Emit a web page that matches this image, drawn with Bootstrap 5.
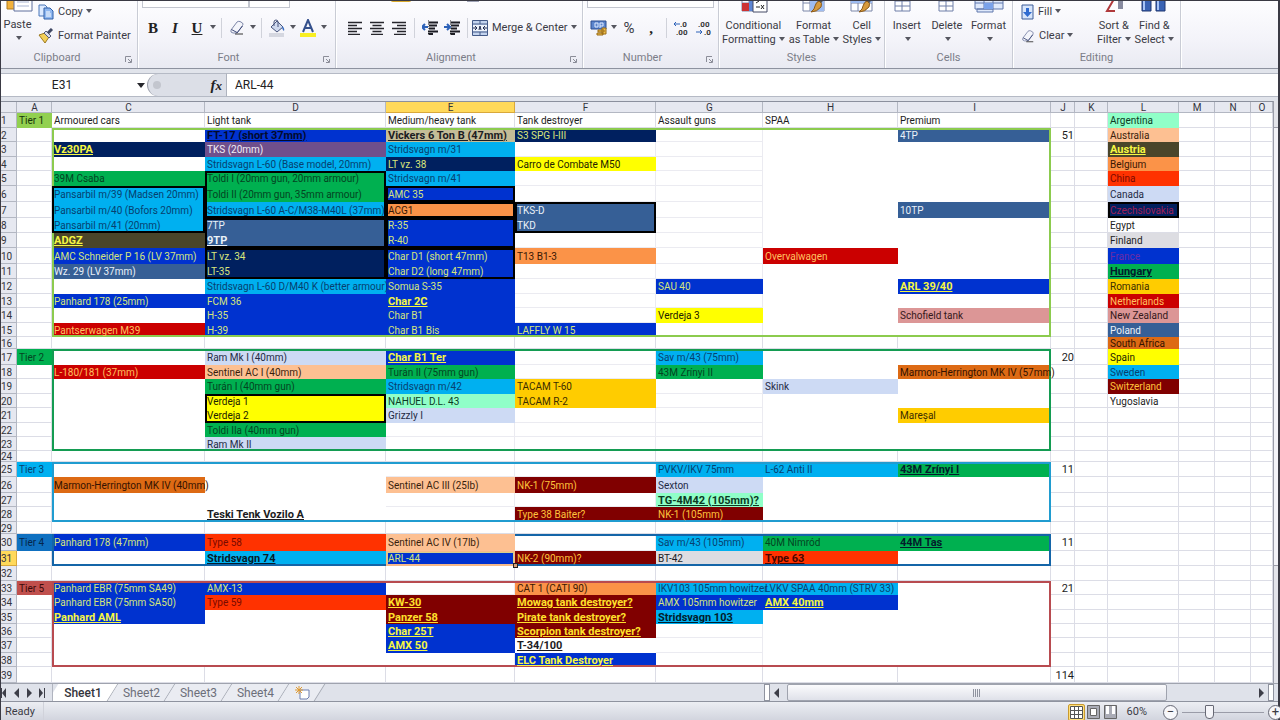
<!DOCTYPE html>
<html lang="en">
<head>
<meta charset="utf-8">
<meta name="viewport" content="width=device-width, initial-scale=1">
<title>Tank tiers - Sheet1</title>
<link href="https://cdn.jsdelivr.net/npm/bootstrap@5.3.0/dist/css/bootstrap.min.css" rel="stylesheet">
<style>
body{font-family:Roboto,"Liberation Sans",sans-serif;font-size:11px;line-height:14px;color:#3b3b45;background:#fff;overflow:hidden}
.app{border:solid #3a3a44;border-width:1px 2px 1px 1px}
button{border:0;background:none;padding:0;color:inherit}
/* ribbon */
.ribbon{height:68px;background:linear-gradient(#fdfdff,#f3f3f9 60%,#e9eaf2);border-bottom:1px solid #8d929f}
.grp{overflow:hidden;border-right:1px solid #c9ccd5;box-shadow:1px 0 #fff;position:relative}
.g-clip{width:137px}.g-font{width:198px}.g-align{width:247px}.g-num{width:136px}.g-style{width:166px}.g-cells{width:128px}.g-edit{width:168px}
.body-area{height:72px}
.cap{height:20px;line-height:20px;color:#7b7d88;text-align:center}
.launch{position:absolute;right:5px;bottom:5px}
.paste{width:33px}
.fill-clear{width:76px}
.w-font{width:107px}.w-size{width:41px}.w-num{width:127px}
.tool{width:22px;height:28px}
.caret{width:9px;height:28px}
.caret::after,.dn::after{content:"";display:inline-block;border:3px solid transparent;border-top:4px solid #55565f;border-bottom:0;vertical-align:2px}
.dn::after{margin-left:3px}
.vr-line{width:1px;height:20px;background:#d0d2da}
.tool-row{height:28px;margin:6px 0}
.sel{height:22px;border:1px solid #c3c6cf;background:#fff;font-size:11px;color:#222;appearance:none;padding:0 4px}
.small-row{height:24px}
.big{line-height:14px;text-align:center}
.big svg{margin-bottom:6px}
.serif{font-family:"Liberation Serif",serif;font-weight:700;font-size:15px;color:#222}
.pct{font-size:15px}
.lit{background:#ffdf6b;border:1px solid #d9a92c;border-radius:3px;height:22px}
/* formula bar */
.fbar{height:32px;background:#e1e4eb;padding:4px 0}
.fbar>*{border-top:1px solid #b5bac5;border-bottom:1px solid #b5bac5;height:24px}
.namebox{width:136px;border-left:0;border-right:0;border-radius:0;padding:0 14px 0 0;text-align:center;font-size:12px;color:#222;background:#fff}
.namedrop{width:10px;background:#fff}
.fx-area{width:80px;background:linear-gradient(90deg,#fff 8px,#dcdfe7 8px);border-right:1px solid #aeb3be}
.knob{width:22px;height:22px;border-radius:11px;background:#dcdfe7;border-left:1px solid #9b9fab}
.knob::after{content:"";display:block;width:8px;height:8px;border-radius:4px;background:#c3c6ce;margin:0 0 0 5px}
.formula{border-left:0;border-right:0;padding:0 8px;font-size:12px;color:#222;min-width:0}
/* grid */
.sheet{table-layout:fixed;border-collapse:separate;border-spacing:0;color:#1c1c22;font-size:10px;line-height:11px;min-width:0}
.sheet th,.sheet td{padding:0 0 0 2px;white-space:nowrap;vertical-align:middle;overflow:visible;font-weight:400}
.sheet td{box-shadow:var(--t,0 0 #0000),var(--b,0 0 #0000),var(--l,0 0 #0000),var(--r,0 0 #0000),inset -1px -1px var(--grid,#dcdde6)}
.sheet th{background:#e6e8f0;color:#33343c;box-shadow:inset -1px -1px #b3b7c2;text-align:center;padding:0}
.sheet thead th{height:12px;border-top:1px solid #8b909d;line-height:10px}
.sheet tbody th{overflow:hidden;text-align:left}
.sheet .hot{background:#ffd95a;box-shadow:inset -1px -1px #d9a83a}
.r11{height:11px}.r12{height:12px}.r14{height:14px}.r15{height:15px}.r16{height:16px}.r17{height:17px}
.sheet .num{text-align:right;padding-right:1px;font-size:11px}
.sheet .faint{--grid:#ebebf1}.sheet .clear,.sheet .fill{--grid:transparent}
.sheet .bu{font-weight:700;text-decoration:underline;font-size:11px}
.fr{background:#0032cf;color:#d5e57c}.fr.bu,.at.bu,.cz.bu{color:#f6f743}.pl{background:#365f96;color:#eaf1f8}.cz{background:#00205f;color:#d9e57c}
.se{background:#00b0f0;color:#07406f}.hu{background:#00b050;color:#044422}.se.bu,.hu.bu{color:#031c2c}.es{background:#ff0;color:#222200}
.be{background:#fb9348;color:#3a1804}.nl{background:#cb0000;color:#ffc061}.cn{background:#ff3200;color:#7a0a00}.cn.bu{color:#4a0500}
.za{background:#dd6a14;color:#341200}.ch{background:#800000;color:#ffc33c}.ch.bu{color:#ffe02c}.ro{background:#ffcc00;color:#3c2c00}
.ca{background:#cddaf4;color:#1f2a44}.au{background:#fdc092;color:#3a1e0c}.ar{background:#90ffc8;color:#0c3a24}.nz{background:#dc9696;color:#35181a}
.at{background:#4a452a}.fi{background:#dddde2}.uk{background:#c4bd97}.tks{background:#6f4f8c;color:#f1edf5}
.fr.bu.inkdark{color:#020a2c}.inkred{color:#9c1e55}.fr.inkviolet{color:#6a2ba6}
.t1{background:#92d050;color:#16330a}.t4{background:#0f70c0;color:#05264a}.t5{background:#c0504d;color:#3a0a0a}
/* cell edges: side by colour */
.t-k{--t:inset 0 2px #000}.b-k{--b:inset 0 -2px #000}.l-k{--l:inset 2px 0 #000}.r-k{--r:inset -2px 0 #000}
.t-1{--t:inset 0 2px #8ccb4e}.b-1{--b:inset 0 -2px #8ccb4e}.l-1{--l:inset 2px 0 #8ccb4e}.r-1{--r:inset -2px 0 #8ccb4e}
.t-2{--t:inset 0 2px #149c52}.b-2{--b:inset 0 -2px #149c52}.l-2{--l:inset 2px 0 #149c52}.r-2{--r:inset -2px 0 #149c52}
.t-3{--t:inset 0 2px #209cd0}.b-3{--b:inset 0 -2px #209cd0}.l-3{--l:inset 2px 0 #209cd0}.r-3{--r:inset -2px 0 #209cd0}
.t-4{--t:inset 0 2px #1465a8}.b-4{--b:inset 0 -2px #1465a8}.l-4{--l:inset 2px 0 #1465a8}.r-4{--r:inset -2px 0 #1465a8}
.t-5{--t:inset 0 2px #b84b50}.b-5{--b:inset 0 -2px #b84b50}.l-5{--l:inset 2px 0 #b84b50}.r-5{--r:inset -2px 0 #b84b50}
.sheet .active-cell{position:relative;box-shadow:inset 0 -2px #f5b988,inset 0 0 0 1px #f5b988,inset 0 0 0 2px #d8cf8a}
.handle{position:absolute;right:-3px;bottom:-2px;width:5px;height:5px;background:#d9a27c;border:1px solid #222}
.vbar{width:5px;background:#e3e4ea;border-left:1px solid #9a9ca8}
.vbar .up{height:27px;border-bottom:1px solid #9a9ca8}
.vbar .thumb{height:438px;background:#f3f3f8;border-bottom:1px solid #9a9ca8}
/* tabs */
.tabs{height:19px;background:#dfe2ea;border-top:1px solid #9fa3ae;border-bottom:1px solid #8f939f}
.navs{width:52px;border-right:1px solid #b0b4bf;z-index:2;background:#dfe2ea}
.sheettab{position:relative;z-index:0;width:57px;font-size:12px;color:#6d6f7a}
.sheettab::before{content:"";position:absolute;inset:0;z-index:-1;transform:skewX(-32deg);background:#eaecf2;border-right:1px solid #a3a7b2}
.sheettab.on{width:60px;color:#33343c;font-weight:500}.sheettab.on::before{background:#fff}
.sheettab.new{width:36px}
.hbar{width:514px}
.split{width:6px;height:17px;border:1px solid #8f939f;background:#fff}
.hthumb{width:380px;height:17px;border:1px solid #9fa3ae;border-radius:2px;background:linear-gradient(#fbfbfd,#dfe1e9)}
.tri-l{border:5px solid transparent;border-right-color:#3d3e48;border-left:0}
.tri-r{border:5px solid transparent;border-left-color:#3d3e48;border-right:0}
.status{min-height:17px;background:linear-gradient(#eceef3,#cfd2dc)}
.zoomer{appearance:none;width:82px;height:15px;background:linear-gradient(#9a9ca8,#9a9ca8) center/100% 1px no-repeat}
.zoomer::-webkit-slider-thumb{appearance:none;width:9px;height:14px;background:#f5f5f9;border:1px solid #666874;border-radius:1px 1px 4px 4px}
.rnd{width:15px;height:15px;border:1px solid #666874;border-radius:8px;background:#f7f7fa;line-height:12px;font-size:13px}
.rnd.edge{margin-right:-5px}
.view{width:17px;height:17px}
.view.on{background:#ffe07c;border:1px solid #c99a2e;border-radius:2px}
</style>
</head>
<body>
<svg width="0" height="0" class="position-absolute" aria-hidden="true">
  <symbol id="launch" viewBox="0 0 7 7"><path d="M.5 6V.5H6M3 3l3 3M6.500 3v3.500H3" fill="none" stroke="#8b8d98"/></symbol>
  <symbol id="eraser" viewBox="0 0 16 16"><path d="M2 10 8 2q1-1 3-.5l2.500 1.500q1 1 0 2.500L8 13H4q-3-.5-2-3z" fill="#f4f5fb" stroke="#7d86a8"/><path d="M2.500 9.500 8 12.500M8 13l5.500-7" stroke="#3f4a78" fill="none"/><path d="M6 14h8" stroke="#333"/></symbol>
  <symbol id="al" viewBox="0 0 14 14"><path d="M0 1.500h14M0 4.500h9M0 7.500h14M0 10.500h9M0 13.500h12" stroke="#26262c" stroke-width="1.500"/></symbol>
  <symbol id="ac" viewBox="0 0 14 14"><path d="M0 1.500h14M2.500 4.500h9M0 7.500h14M2.500 10.500h9M1 13.500h12" stroke="#26262c" stroke-width="1.500"/></symbol>
  <symbol id="ar" viewBox="0 0 14 14"><path d="M0 1.500h14M5 4.500h9M0 7.500h14M5 10.500h9M2 13.500h12" stroke="#26262c" stroke-width="1.500"/></symbol>
  <symbol id="indent" viewBox="0 0 16 16"><path d="M6 2.500h10M7 5.500h8M7 8.500h6M6 11.500h10M6 14h5" stroke="#1d1d24" stroke-width="1.800"/><path d="M6.500 0v16" stroke="#888" stroke-dasharray="1 1"/></symbol>
  <symbol id="grid" viewBox="0 0 32 32"><path d="M5 6h21v24H5zM5 14h21M5 22h21M12 6v24M19 6v24" fill="#fff" stroke="#7a86a8"/></symbol>
</svg>
<div class="app min-vh-100 d-flex flex-column">
  <header class="ribbon d-flex">
    <section class="grp g-clip d-flex flex-column justify-content-end">
      <div class="body-area d-flex flex-shrink-0">
        <button class="paste big d-flex flex-column align-items-center pt-1"><svg width="32" height="32" class="flex-shrink-0"><path d="M5 0h20v29H5z" fill="#f2b23c" stroke="#b07a1c"/><path d="M12 8h18v23H12z" fill="#fff" stroke="#5e6f9c"/><path d="M15 18h12M15 22h12M15 26h12" stroke="#a9b5d2"/></svg>Paste<span class="dn"></span></button>
        <div class="ps-1 d-flex flex-column justify-content-end">
          <button class="small-row d-flex align-items-center gap-1"><svg width="16" height="16"><path d="M1 1h6l2 2v9H1z" fill="#dceaff" stroke="#4b76b8"/><path d="M6 4h6l3 3v8H6z" fill="#8fb7ef" stroke="#2f5fa8"/><path d="M8 8h4M8 10h5M8 12h5" stroke="#fff"/></svg><span class="dn">Copy</span></button>
          <button class="small-row d-flex align-items-center gap-1"><svg width="16" height="16"><path d="m1 7 6-2 4 4-4 6z" fill="#f3cf58" stroke="#9b7820"/><path d="M6 5l2-2 5 5-2 2z" fill="#d9dcea" stroke="#555b77"/><path d="m10 5 4-4" stroke="#3f4763" stroke-width="3"/></svg>Format Painter</button>
        </div>
      </div>
      <div class="cap flex-shrink-0 pe-4">Clipboard</div><svg class="launch" width="7" height="7"><use href="#launch"/></svg>
    </section>
    <section class="grp g-font d-flex flex-column justify-content-end">
      <div class="body-area flex-shrink-0 ps-1 d-flex flex-column justify-content-end">
        <div class="d-flex"><select class="sel w-font" aria-label="Font"><option>Calibri</option></select><select class="sel w-size" aria-label="Font size"><option>12</option></select><span class="serif ms-2">A</span><span class="serif ms-2">A</span></div>
        <div class="tool-row d-flex align-items-center">
          <button class="tool serif" aria-label="Bold">B</button><button class="tool serif fst-italic" aria-label="Italic">I</button><button class="tool serif text-decoration-underline" aria-label="Underline">U</button><button class="caret" aria-label="Underline styles"></button><span class="vr-line mx-1"></span>
          <button class="tool" aria-label="Erase"><svg width="16" height="16"><use href="#eraser"/></svg></button><button class="caret" aria-label="Erase options"></button><span class="vr-line mx-1"></span>
          <button class="tool" aria-label="Fill colour"><svg width="17" height="18"><path d="m2 8 6-6 6 6-6 5z" fill="#cfd9ee" stroke="#48557c"/><path d="M5 7V3q0-2 2-2t2 2v5" fill="none" stroke="#48557c"/><path d="M13 7q3 2 2 5-2-1-2-5z" fill="#3d6fc0"/><path d="M0 14h15v4H0z" fill="#d5d7e0"/></svg></button><button class="caret" aria-label="Fill colours"></button>
          <button class="tool" aria-label="Font colour"><svg width="16" height="18"><path d="m3 13 5-12 5 12M5 9h6" stroke="#34508c" stroke-width="2" fill="none"/><path d="M0 14h16v4H0z" fill="#f8ee22"/></svg></button><button class="caret" aria-label="Font colours"></button>
        </div>
      </div>
      <div class="cap flex-shrink-0 pe-3">Font</div><svg class="launch" width="7" height="7"><use href="#launch"/></svg>
    </section>
    <section class="grp g-align d-flex flex-column justify-content-end">
      <div class="body-area flex-shrink-0 ps-1 d-flex flex-column justify-content-end">
        <div class="d-flex"><button class="tool ms-4" aria-label="Top align"><svg width="14" height="14"><use href="#ac"/></svg></button><button class="tool lit ms-1" aria-label="Middle align"><svg width="14" height="14"><use href="#ac"/></svg></button><button class="tool ms-3" aria-label="Orientation"><svg width="14" height="16"><path d="m2 14 9-9" stroke="#444"/></svg></button><button class="d-flex align-items-center gap-1 ms-3"><svg width="14" height="16"><path d="M1 1h12v14H1z" fill="#c5d5f0" stroke="#444c70"/></svg>Wrap Text</button></div>
        <div class="tool-row d-flex align-items-center ps-1">
          <button class="tool" aria-label="Align left"><svg width="14" height="14"><use href="#al"/></svg></button><button class="tool" aria-label="Centre"><svg width="14" height="14"><use href="#ac"/></svg></button><button class="tool" aria-label="Align right"><svg width="14" height="14"><use href="#ar"/></svg></button><span class="vr-line mx-1"></span>
          <button class="tool" aria-label="Decrease indent"><svg width="16" height="16"><use href="#indent"/><path d="M6 7H1m2-3L0 7l3 3" stroke="#2d62b8" stroke-width="2" fill="none"/></svg></button><button class="tool" aria-label="Increase indent"><svg width="16" height="16"><use href="#indent"/><path d="M0 7h5M3 4l3 3-3 3" stroke="#2d62b8" stroke-width="2" fill="none"/></svg></button><span class="vr-line mx-1"></span>
          <button class="d-flex align-items-center"><svg width="16" height="16" class="me-1"><path d="M.5.5h15v15H.5zM.5 4h15M.5 12h15M8 .5V4M8 12v3.500" fill="#c3d3ee" stroke="#445a88"/><path d="M1 5h14v6H1z" fill="#eef3fc"/><path d="M1 8h4m10 0h-4M3 6 5 8 3 10M13 6l-2 2 2 2M7 10l1-4 1 4" stroke="#222c50" fill="none"/></svg><span class="dn">Merge &amp; Center</span></button>
        </div>
      </div>
      <div class="cap flex-shrink-0 pe-3">Alignment</div><svg class="launch" width="7" height="7"><use href="#launch"/></svg>
    </section>
    <section class="grp g-num d-flex flex-column justify-content-end">
      <div class="body-area flex-shrink-0 ps-1 d-flex flex-column justify-content-end">
        <select class="sel w-num" aria-label="Number format"><option>General</option></select>
        <div class="tool-row d-flex align-items-center">
          <button class="tool" aria-label="Accounting"><svg width="17" height="17"><path d="M1 1h15v8H1z" fill="#5b84cc" stroke="#2c4c90"/><path d="M5 3h3v4H5zM10 3v5M10 3h3v3h-3" fill="none" stroke="#dfe9ff"/><path d="M8 10h6v2H8zM7 13h6v2H7zM12 8h4v6h-4z" fill="#f0bf4c" stroke="#9a6d16"/></svg></button><button class="caret" aria-label="Currency"></button>
          <button class="tool pct" aria-label="Percent">%</button><button class="tool serif" aria-label="Comma">,</button><span class="vr-line mx-1"></span>
          <button class="tool" aria-label="More decimals"><svg width="18" height="16" font-size="8" font-weight="700" fill="#333"><text x="7" y="7">.0</text><text x="3" y="15">.00</text><path d="M7 4H1m2-2L1 4l2 2" stroke="#2d62b8" fill="none"/></svg></button><button class="tool" aria-label="Fewer decimals"><svg width="18" height="16" font-size="8" font-weight="700" fill="#333"><text x="3" y="7">.00</text><text x="9" y="15">.0</text><path d="M1 12h6m-2-2 2 2-2 2" stroke="#2d62b8" fill="none"/></svg></button>
        </div>
      </div>
      <div class="cap flex-shrink-0 pe-3">Number</div><svg class="launch" width="7" height="7"><use href="#launch"/></svg>
    </section>
    <section class="grp g-style d-flex flex-column justify-content-end">
      <div class="body-area flex-shrink-0 d-flex justify-content-center gap-1 pt-1">
        <button class="big"><svg width="32" height="32"><use href="#grid"/><path d="M5 22h7v8H5z" fill="#c33"/><path d="M12 20h7v10h-7z" fill="#5d86d4"/><path d="M16 14h14v17H16z" fill="#fff" stroke="#444b66"/><path d="m19 18 3 2-3 2m5-4h4m-9 8h4m1-2 3 4m0-4-3 4" stroke="#222" fill="none"/></svg><br>Conditional<br><span class="dn">Formatting</span></button>
        <button class="big"><svg width="32" height="32"><use href="#grid"/><path d="M12 14h14v16H12z" fill="#9ebcf0"/><path d="m29 10-8 12" stroke="#555" stroke-width="4"/><path d="M21 20q4 2 2 6-4 5-10 5 4-3 4-6 1-4 4-5z" fill="#d79a3c" stroke="#8a5a1c"/></svg><br>Format<br><span class="dn">as Table</span></button>
        <button class="big"><svg width="32" height="32"><use href="#grid"/><path d="M5 14h21v8H5z" fill="#9ebcf0"/><path d="m29 10-8 12" stroke="#555" stroke-width="4"/><path d="M21 20q4 2 2 6-4 5-10 5 4-3 4-6 1-4 4-5z" fill="#d79a3c" stroke="#8a5a1c"/></svg><br>Cell<br><span class="dn">Styles</span></button>
      </div>
      <div class="cap flex-shrink-0">Styles</div>
    </section>
    <section class="grp g-cells d-flex flex-column justify-content-end">
      <div class="body-area flex-shrink-0 d-flex justify-content-center gap-2 pt-1">
        <button class="big"><svg width="32" height="32"><path d="M4 20h15v10H4zM4 25h15M11 20v10" fill="#fff" stroke="#6f7ea8"/></svg><br>Insert<br><span class="dn"></span></button>
        <button class="big"><svg width="32" height="32"><path d="M8 20h14v10H8zM8 25h14M15 20v10" fill="#fff" stroke="#6f7ea8"/></svg><br>Delete<br><span class="dn"></span></button>
        <button class="big"><svg width="32" height="32"><path d="M3 16h28v12H3zM3 22h28M12 16v12M21 16v12M5 28h16v3H5z" fill="#dfe9fb" stroke="#5f76ac"/><path d="M12 22h9v6h-9z" fill="#7aa2ea"/></svg><br>Format<br><span class="dn"></span></button>
      </div>
      <div class="cap flex-shrink-0">Cells</div>
    </section>
    <section class="grp g-edit d-flex flex-column justify-content-end">
      <div class="body-area flex-shrink-0 d-flex ps-2">
        <div class="fill-clear d-flex flex-column justify-content-end">
          <button class="small-row d-flex align-items-center gap-1"><svg width="13" height="16"><path d="M1 1h11v14H1z" fill="#d7e5fb" stroke="#3d5c98"/><path d="M5 4h3v4h3l-4.500 5L2 8h3z" fill="#2f6bd0"/></svg><span class="dn">Fill</span></button>
          <button class="small-row d-flex align-items-center gap-1"><svg width="14" height="15"><use href="#eraser" width="14" height="15"/></svg><span class="dn">Clear</span></button>
        </div>
        <button class="big pt-1"><svg width="32" height="32"><path d="M9 18h7l-7 12h8" stroke="#b0393c" stroke-width="2" fill="none"/><path d="M20 10h5v18h-5z" fill="#888ba0"/></svg><br>Sort &amp;<br><span class="dn">Filter</span></button>
        <button class="big pt-1 ms-1"><svg width="32" height="32"><path d="M4 10h9v20H4zM18 10h9v20h-9z" fill="#3a63b4" stroke="#1f3670"/><path d="M6 20v9M20 20v9" stroke="#a8c4f6" stroke-width="2"/></svg><br>Find &amp;<br><span class="dn">Select</span></button>
      </div>
      <div class="cap flex-shrink-0">Editing</div>
    </section>
  </header>

  <div class="fbar d-flex">
    <input class="namebox" aria-label="Name box" value="E31">
    <button class="namedrop" aria-label="Names"><svg width="8" height="5" class="d-block"><path d="M0 0h8L4 5z" fill="#26262c"/></svg></button>
    <div class="fx-area d-flex align-items-center justify-content-between pe-1"><span class="knob d-flex align-items-center"></span><button class="serif fst-italic" aria-label="Insert function">f<small>x</small></button></div>
    <input class="formula flex-grow-1" aria-label="Formula" value="ARL-44">
  </div>

  <main class="d-flex">
    <table class="sheet w-100" id="sheet">
      <colgroup id="cols"></colgroup>
      <thead><tr id="heads"></tr></thead>
      <tbody id="rows"></tbody>
    </table>
    <div class="vbar d-flex flex-column flex-shrink-0"><div class="up"></div><div class="thumb"></div></div>
  </main>

  <nav class="tabs d-flex">
    <div class="navs d-flex align-items-center justify-content-between pe-1" aria-hidden="true"><svg width="46" height="10" fill="#3d3e48"><path d="M0 0h1v10H0zM5 0v10L1 5zM18 0v10l-5-5zM26 0v10l5-5zM38 0v10l4-5zM43 0h1v10h-1z"/></svg></div>
    <button class="sheettab on">Sheet1</button><button class="sheettab">Sheet2</button><button class="sheettab">Sheet3</button><button class="sheettab">Sheet4</button><button class="sheettab new" aria-label="Insert sheet"><svg width="15" height="14"><path d="M5 4h9v7q-2 3-4 2H5z" fill="#fff" stroke="#6c7eb0"/><path d="M4 0v8M0 4h8M1 1l6 6M7 1 1 7" stroke="#e09a30"/></svg></button>
    <div class="hbar ms-auto d-flex align-items-center"><span class="split"></span><button class="tri-l ms-1 me-2" aria-label="Scroll left"></button><span class="hthumb d-flex align-items-center justify-content-center"><svg width="8" height="8"><path d="M.5 0v8M2.500 0v8M4.500 0v8M6.500 0v8" stroke="#8f939f"/></svg></span><button class="tri-r ms-auto" aria-label="Scroll right"></button><span class="split mx-1"></span></div>
  </nav>
  <footer class="status flex-grow-1 d-flex align-items-center ps-1">
    <span>Ready</span><span class="vr-line ms-2"></span>
    <div class="ms-auto d-flex align-items-center">
      <button class="view on" aria-label="Normal"><svg width="13" height="13" class="d-block m-auto"><path d="M.5.5h12v12H.5zM.5 4.500h12M.5 8.500h12M4.500.5v12M8.500.5v12" fill="#fff" stroke="#555"/></svg></button>
      <button class="view" aria-label="Page layout"><svg width="13" height="14" class="d-block m-auto"><path d="M.5.5h12v13H.5z" fill="#aaacb6" stroke="#666"/><path d="M3.500 3.500h6v7h-6z" fill="#fff" stroke="#666"/></svg></button>
      <button class="view" aria-label="Page breaks"><svg width="13" height="14" class="d-block m-auto"><path d="M.5.5h12v13H.5z" fill="#aaacb6" stroke="#666"/><path d="M2 1h3v8H2zM8 1h3v8H8z" fill="#fff"/></svg></button>
      <span class="ms-2 me-3">60%</span>
      <button class="rnd me-1" aria-label="Zoom out">−</button><input class="zoomer me-1" type="range" min="0" max="100" value="31" aria-label="Zoom"><button class="rnd edge" aria-label="Zoom in">+</button>
    </div>
  </footer>
</div>
<script src="https://cdn.jsdelivr.net/npm/bootstrap@5.3.0/dist/js/bootstrap.bundle.min.js"></script>
<script>
const columns = [["",16],["A",35],["C",153],["D",181],["E",129],["F",141],["G",107],["H",135],["I",153],["J",24],["K",33],["L",71],["M",36],["N",36],["O",0]];
const heights = [15,14,15,14,15,16,16,15,15,16,15,15,14,15,14,12,16,14,15,14,15,14,14,11,15,16,14,15,12,17,15,15,14,15,14,14,15,14,16];
// cell | classes | text
const cells = `A1|t1|Tier 1
C1||Armoured cars
D1||Light tank
E1||Medium/heavy tank
F1||Tank destroyer
G1||Assault guns
H1||SPAA
I1||Premium
C3|cz bu|Vz30PA
C5|hu|39M Csaba
C6|se|Pansarbil m/39 (Madsen 20mm)
C7|se|Pansarbil m/40 (Bofors 20mm)
C8|se|Pansarbil m/41 (20mm)
C9|at bu|ADGZ
C10|fr|AMC Schneider P 16 (LV 37mm)
C11|pl|Wz. 29 (LV 37mm)
C13|fr|Panhard 178 (25mm)
C15|nl|Pantserwagen M39
D2|fr bu inkdark|FT-17 (short 37mm)
D3|tks|TKS (20mm)
D4|se|Stridsvagn L-60  (Base model, 20mm)
D5|hu|Toldi I (20mm gun, 20mm armour)
D6|hu|Toldi II (20mm gun, 35mm armour)
D7|se|Stridsvagn L-60 A-C/M38-M40L (37mm)
D8|pl|7TP
D9|pl bu|9TP
D10|cz|LT vz. 34
D11|cz|LT-35
D12|se|Stridsvagn L-60 D/M40 K (better armour)
D13|fr|FCM 36
D14|fr|H-35
D15|fr|H-39
E2|uk bu|Vickers 6 Ton B (47mm)
E3|se|Stridsvagn m/31
E4|cz|LT vz. 38
E5|se|Stridsvagn m/41
E6|fr|AMC 35
E7|be|ACG1
E8|fr|R-35
E9|fr|R-40
E10|fr|Char D1 (short 47mm)
E11|fr|Char D2 (long 47mm)
E12|fr|Somua S-35
E13|fr bu|Char 2C
E14|fr|Char B1
E15|fr|Char B1 Bis
F2|cz|S3 SPG I-III
F4|es|Carro de Combate M50
F7|pl|TKS-D
F8|pl|TKD
F10|be|T13 B1-3
F15|fr|LAFFLY W 15
G12|fr|SAU 40
G14|es|Verdeja 3
H10|nl|Overvalwagen
I2|pl|4TP
I7|pl|10TP
I12|fr bu|ARL 39/40
I14|nz|Schofield tank
J2|num|51
A17|hu|Tier 2
C18|nl|L-180/181 (37mm)
D17|ca|Ram Mk I (40mm)
D18|au|Sentinel AC I (40mm)
D19|hu|Turán I (40mm gun)
D20|es|Verdeja 1
D21|es|Verdeja 2
D22|hu|Toldi IIa  (40mm gun)
D23|ca|Ram Mk II
E17|fr bu|Char B1 Ter
E18|hu|Turán II (75mm gun)
E19|se|Stridsvagn m/42
E20|ar|NAHUEL D.L. 43
E21|ca|Grizzly I
F19|ro|TACAM T-60
F20|ro|TACAM R-2
G17|se|Sav m/43 (75mm)
G18|hu|43M Zrínyi II
H19|ca|Skink
I18|za|Marmon-Herrington MK IV (57mm)
I21|ro|Mareșal
J17|num|20
A25|se|Tier 3
C26|za|Marmon-Herrington MK IV (40mm)
D28|bu|Teski Tenk Vozilo A
E26|au|Sentinel AC III (25lb)
F26|ch|NK-1 (75mm)
F28|ch|Type 38 Baiter?
G25|se|PVKV/IKV 75mm
G26|ca|Sexton
G27|ar bu|TG-4M42 (105mm)?
G28|ch|NK-1 (105mm)
H25|se|L-62 Anti II
I25|hu bu|43M Zrínyi I
J25|num|11
A30|t4|Tier 4
C30|fr|Panhard 178 (47mm)
D30|cn|Type 58
D31|se bu|Stridsvagn 74
E30|au|Sentinel AC IV (17lb)
E31|fr active-cell|ARL-44
F31|ch|NK-2 (90mm)?
G30|se|Sav m/43 (105mm)
G31|fi|BT-42
H30|hu|40M Nimród
H31|cn bu|Type 63
I30|hu bu| 44M Tas
J30|num|11
A33|t5|Tier 5
C33|fr|Panhard EBR (75mm SA49)
C34|fr|Panhard EBR (75mm SA50)
C35|fr bu|Panhard AML
D33|fr|AMX-13
D34|cn|Type 59
E34|ch bu|KW-30
E35|ch bu|Panzer 58
E36|fr bu|Char 25T
E37|fr bu|AMX 50
F33|be|CAT 1 (CATI 90)
F34|ch bu|Mowag tank destroyer?
F35|ch bu|Pirate tank destroyer?
F36|ch bu|Scorpion tank destroyer?
F37|bu|T-34/100
F38|fr bu|ELC Tank Destroyer
G33|se|IKV103 105mm howitzer
G34|fr|AMX 105mm howitzer
G35|se bu|Stridsvagn 103
H33|se|LVKV SPAA 40mm (STRV 33)
H34|fr bu|AMX 40mm
J33|num|21
J39|num|114
L1|ar|Argentina
L2|au|Australia
L3|at bu|Austria
L4|be|Belgium
L5|cn|China
L6|ca|Canada
L7|cz inkred|Czechslovakia
L8||Egypt
L9|fi|Finland
L10|fr inkviolet|France
L11|hu bu|Hungary
L12|ro|Romania
L13|nl|Netherlands
L14|nz|New Zealand
L15|pl|Poland
L16|za|South Africa
L17|es|Spain
L18|se|Sweden
L19|ch|Switzerland
L20||Yugoslavia`;
// column from, row from, column to, row to, edge colour
const boxes = [["C",2,"I",15,"1"],["C",17,"I",23,"2"],["C",25,"I",28,"3"],["C",30,"I",31,"4"],["C",33,"I",38,"5"],
  ["C",6,"C",8,"k"],["D",5,"D",7,"k"],["D",8,"D",9,"k"],["D",10,"D",11,"k"],["E",6,"E",6,"k"],["E",7,"E",7,"k"],["E",8,"E",9,"k"],["E",10,"E",11,"k"],["F",7,"F",8,"k"],["D",20,"D",21,"k"],["L",7,"L",7,"k"]];
const data = {};
cells.split("\n").forEach(line => { const [ref, cls, text] = line.split("|"); data[ref] = {cls, text}; });
const add = (parent, tag, cls, text) => { const n = parent.appendChild(document.createElement(tag)); if (cls) n.className = cls; if (text) n.textContent = text; return n; };
columns.forEach(([name, width]) => {
  const col = add(document.getElementById("cols"), "col");
  if (width) col.style.width = width + "px";
  add(document.getElementById("heads"), "th", name === "E" ? "hot" : "", name).scope = "col";
});
heights.forEach((h, i) => {
  const r = i + 1, tr = add(document.getElementById("rows"), "tr", "r" + h);
  add(tr, "th", r === 31 ? "hot" : "", String(r)).scope = "row";
  columns.slice(1).forEach(([c]) => {
    const d = data[c + r] || {cls: "", text: ""}, edge = {};
    let cls = d.cls.split(" ");
    let inside = false;
    boxes.forEach(([c1, r1, c2, r2, k]) => {
      if (c < c1 || c > c2 || r < r1 || r > r2) return;
      inside = true;
      if (r === r1 && !(k === "4" && c < "F")) edge.t = k;
      if (r === r2) edge.b = k;
      if (c === c1) edge.l = k;
      if (c === c2) edge.r = k;
    });
    for (const s in edge) cls.push(s + "-" + edge[s]);
    if (d.text && d.cls && d.cls !== "num") cls.push("fill");
    else if (inside) cls.push("EFG".includes(c) ? "faint" : "clear");
    const td = add(tr, "td", cls.join(" ").trim(), d.text);
    if (d.cls.includes("active-cell")) add(td, "span", "handle");
  });
});
</script>
</body>
</html>
